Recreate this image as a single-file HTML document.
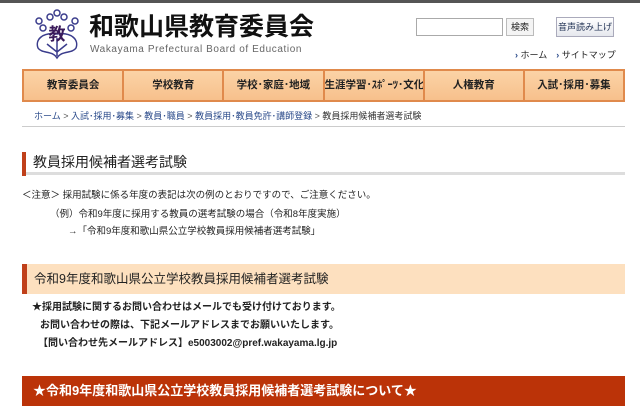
<!DOCTYPE html>
<html><head><meta charset="utf-8"><style>
*{margin:0;padding:0;box-sizing:border-box}
body{width:640px;height:412px;overflow:hidden;background:#fff;font-family:"Liberation Sans","Noto Sans CJK JP",sans-serif;color:#222;position:relative}
.a{position:absolute;white-space:nowrap}
.nav{position:absolute;left:22px;top:69px;width:603px;height:33px;display:flex;border:2px solid #e08a4c;background:linear-gradient(#fbd3a6,#f7c08c)}
.nav div{flex:1;border-right:2px solid #e08a4c;text-align:center;line-height:29px;font-size:10.5px;font-weight:bold;color:#222;white-space:nowrap;overflow:hidden}
.nav div:last-child{border-right:none}
</style></head><body>
<div class="a" style="left:0;top:0;width:640px;height:3px;background:#555"></div>
<svg class="a" style="left:32px;top:8px" width="50" height="52" viewBox="0 0 50 52">
<g fill="none" stroke="#3a3c8c" stroke-width="1.5">
<circle cx="25" cy="5" r="3"/><circle cx="18" cy="9" r="3"/><circle cx="32" cy="9" r="3"/>
<circle cx="7" cy="13" r="3"/><circle cx="43" cy="13" r="3"/><circle cx="11" cy="20" r="3"/><circle cx="39" cy="20" r="3"/>
<path d="M25 26 C10 24 3 32 6 40 C10 46 20 42 25 50 C30 42 40 46 44 40 C47 32 40 24 25 26Z"/>
<path d="M25 30 V48 M15 36 L25 44 L35 36"/>
</g>
<text x="25" y="32" font-size="17" font-weight="bold" text-anchor="middle" fill="#3a1a5a" font-family="Noto Sans CJK JP">教</text>
</svg>
<div class="a" style="left:89px;top:12px;font-size:25px;font-weight:bold;color:#111;line-height:30px">和歌山県教育委員会</div>
<div class="a" style="left:90px;top:44px;font-size:10px;color:#666;letter-spacing:0.6px">Wakayama Prefectural Board of Education</div>
<div class="a" style="left:416px;top:18px;width:87px;height:18px;border:1px solid #aaa"></div>
<div class="a" style="left:506px;top:18px;width:28px;height:18px;border:1px solid #bbb;background:#f4f4f4;font-size:9px;line-height:16px;text-align:center">検索</div>
<div class="a" style="left:556px;top:17px;width:58px;height:20px;border:1px solid #aab;background:linear-gradient(#fff,#e6e8ee);font-size:9px;line-height:18px;text-align:center;color:#235">音声読み上げ</div>
<div class="a" style="left:515px;top:48px;font-size:9px;color:#222"><span style="color:#2a4a8a;font-weight:bold">›</span> ホーム　<span style="color:#2a4a8a;font-weight:bold">›</span> サイトマップ</div>
<div class="nav"><div>教育委員会</div><div>学校教育</div><div>学校･家庭･地域</div><div>生涯学習･ｽﾎﾟｰﾂ･文化</div><div>人権教育</div><div>入試･採用･募集</div></div>
<div class="a" style="left:34px;top:109px;font-size:9px;color:#2a4a8a">ホーム <span style="color:#555">&gt;</span> 入試･採用･募集 <span style="color:#555">&gt;</span> 教員･職員 <span style="color:#555">&gt;</span> 教員採用･教員免許･講師登録 <span style="color:#555">&gt;</span> <span style="color:#333">教員採用候補者選考試験</span></div>
<div class="a" style="left:22px;top:126px;width:603px;height:1px;background:#ccc"></div>
<div class="a" style="left:22px;top:152px;width:4px;height:24px;background:#c0401a"></div>
<div class="a" style="left:26px;top:172px;width:599px;height:3px;background:#ddd"></div>
<div class="a" style="left:33px;top:152px;font-size:14px;line-height:20px">教員採用候補者選考試験</div>
<div class="a" style="left:22px;top:189px;font-size:9.5px;line-height:14px">＜注意＞ 採用試験に係る年度の表記は次の例のとおりですので、ご注意ください。</div>
<div class="a" style="left:50px;top:208px;font-size:9.5px;line-height:14px">（例）令和9年度に採用する教員の選考試験の場合（令和8年度実施）</div>
<div class="a" style="left:68px;top:225px;font-size:9.5px;line-height:14px">→「令和9年度和歌山県公立学校教員採用候補者選考試験」</div>
<div class="a" style="left:22px;top:264px;width:603px;height:30px;background:#fde0bf;border-left:5px solid #c0401a"></div>
<div class="a" style="left:34px;top:268px;font-size:12.5px;line-height:22px">令和9年度和歌山県公立学校教員採用候補者選考試験</div>
<div class="a" style="left:32px;top:301px;font-size:10px;font-weight:bold;line-height:14px">★採用試験に関するお問い合わせはメールでも受け付けております。</div>
<div class="a" style="left:40px;top:319px;font-size:10px;font-weight:bold;line-height:14px">お問い合わせの際は、下記メールアドレスまでお願いいたします。</div>
<div class="a" style="left:38px;top:337px;font-size:10px;font-weight:bold;line-height:14px">【問い合わせ先メールアドレス】e5003002@pref.wakayama.lg.jp</div>
<div class="a" style="left:22px;top:376px;width:603px;height:30px;background:#bb3308"></div>
<div class="a" style="left:33px;top:380px;font-size:13px;font-weight:bold;color:#fff;line-height:22px">★令和9年度和歌山県公立学校教員採用候補者選考試験について★</div>
</body></html>
